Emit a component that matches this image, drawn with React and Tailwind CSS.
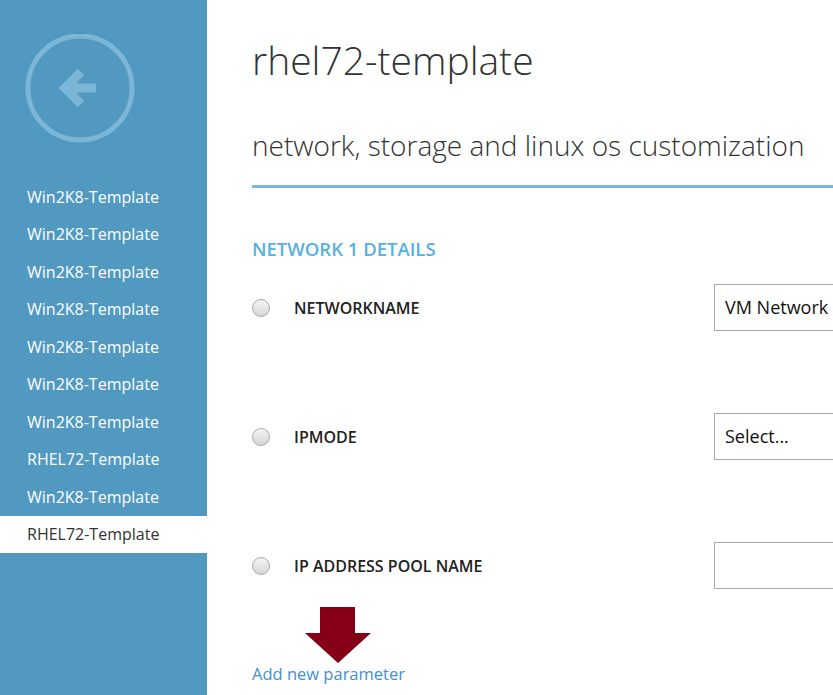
const items = [
  "Win2K8-Template",
  "Win2K8-Template",
  "Win2K8-Template",
  "Win2K8-Template",
  "Win2K8-Template",
  "Win2K8-Template",
  "Win2K8-Template",
  "RHEL72-Template",
  "Win2K8-Template",
  "RHEL72-Template",
];

const Radio = () => (
  <span className="w-[18px] h-[18px] rounded-full border border-[#a9a9a9] bg-gradient-to-b from-[#f4f4f4] to-[#d6d6d6] shrink-0" />
);

const Row = ({ label, value, className }) => (
  <div className={`flex items-center h-[47px] ${className}`}>
    <Radio />
    <span className="ml-[24px] text-[16px] font-semibold text-[#222] flex-1">{label}</span>
    <div className="w-[119px] h-[47px] border border-[#a8a8a8] border-r-0 flex items-center pl-[10px] text-[18px] text-[#111] whitespace-nowrap overflow-hidden">
      {value}
    </div>
  </div>
);

export default function App() {
  return (
    <div
      className="flex w-[833px] h-[695px] overflow-hidden bg-white"
      style={{ fontFamily: '"Open Sans", "Noto Sans", sans-serif' }}
    >
      {/* sidebar */}
      <aside className="w-[207px] shrink-0 bg-[#5199c0] flex flex-col">
        <div className="h-[178px] pt-[34px] pl-[25px]">
          <svg width="110" height="110" viewBox="0 0 110 110">
            <circle cx="55" cy="54" r="52" fill="none" stroke="#7cb6d6" strokeWidth="5" />
            <path d="M71 54 H40 M56 38 L40 54 L56 70" fill="none" stroke="#7cb6d6" strokeWidth="9" strokeLinejoin="miter" />
          </svg>
        </div>
        {items.map((t, i) => (
          <div
            key={i}
            className={`h-[37.5px] flex items-center pl-[27px] text-[16px] ${
              i === items.length - 1 ? "bg-white text-[#333]" : "text-white"
            }`}
          >
            {t}
          </div>
        ))}
      </aside>

      {/* main */}
      <main className="flex-1 pl-[45px] flex flex-col">
        <h1 className="mt-[36px] text-[39px] font-light leading-[48px] text-[#333]">rhel72-template</h1>
        <h2 className="mt-[43px] text-[28px] font-light leading-[36px] text-[#333]">
          network, storage and linux os customization
        </h2>
        <div className="mt-[22px] h-[3px] bg-[#7eb2e2]" />
        <div className="mt-[49px] text-[18.5px] font-semibold text-[#55b0e4] leading-[24px]">NETWORK 1 DETAILS</div>
        <Row label="NETWORKNAME" value="VM Network" className="mt-[23px]" />
        <Row label="IPMODE" value="Select..." className="mt-[82px]" />
        <Row label="IP ADDRESS POOL NAME" value="" className="mt-[82px]" />
        <div className="mt-[18px] pl-[52px] h-[56px]">
          <svg width="68" height="56" viewBox="0 0 68 56">
            <path d="M16 0 H51 V26 H67 L34 56 L1 26 H16 Z" fill="#850017" />
          </svg>
        </div>
        <div className="text-[16.5px] text-[#3f8fd2] leading-[22px]">Add new parameter</div>
      </main>
    </div>
  );
}
